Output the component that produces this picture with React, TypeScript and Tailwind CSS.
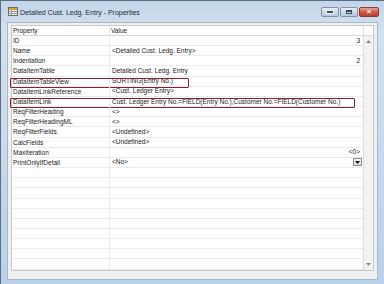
import React from "react";

type Row = { p: string; v?: string; r?: string; dd?: boolean; box?: number };

const rows: Row[] = [
  { p: "ID", r: "3" },
  { p: "Name", v: "<Detailed Cust. Ledg. Entry>" },
  { p: "Indentation", r: "2" },
  { p: "DataItemTable", v: "Detailed Cust. Ledg. Entry" },
  { p: "DataItemTableView", v: "SORTING(Entry No.)", box: 179 },
  { p: "DataItemLinkReference", v: "<Cust. Ledger Entry>" },
  { p: "DataItemLink", v: "Cust. Ledger Entry No.=FIELD(Entry No.),Customer No.=FIELD(Customer No.)", box: 345 },
  { p: "ReqFilterHeading", v: "<>" },
  { p: "ReqFilterHeadingML", v: "<>" },
  { p: "ReqFilterFields", v: "<Undefined>" },
  { p: "CalcFields", v: "<Undefined>" },
  { p: "MaxIteration", r: "<0>" },
  { p: "PrintOnlyIfDetail", v: "<No>", dd: true },
];

const empty = Array.from({ length: 10 }, () => ({ p: "" } as Row));

function TitleIcon() {
  return (
    <svg width="10" height="9" viewBox="0 0 10 9" className="shrink-0">
      <rect x="0.5" y="0.5" width="9" height="8" fill="#f4f4f4" stroke="#6b6b6b" />
      <rect x="1" y="1" width="8" height="2" fill="#e0a030" />
      <line x1="1" y1="4.5" x2="9" y2="4.5" stroke="#9a9a9a" />
      <line x1="1" y1="6.5" x2="9" y2="6.5" stroke="#9a9a9a" />
      <line x1="3.5" y1="3" x2="3.5" y2="8" stroke="#9a9a9a" />
    </svg>
  );
}

export default function App() {
  const all = [...rows, ...empty];
  return (
    <div
      className="w-[384px] h-[284px] flex flex-col overflow-hidden border-l border-t border-[#5c6e82] bg-[linear-gradient(#c3d5e9,#d3e1f0_30px,#b9d1ea)]"
      style={{ fontFamily: '"Liberation Sans", Arial, sans-serif' }}
    >
      {/* title bar */}
      <div className="h-[21px] flex items-center pl-[7px] pr-[5px] shrink-0">
        <TitleIcon />
        <span className="ml-[2px] text-[7px] text-[#1b2a3e] leading-none mt-[1px]">
          Detailed Cust. Ledg. Entry - Properties
        </span>
        <div className="ml-auto flex self-start mt-[6px] gap-[1px]">
          <div className="w-[18px] h-[10px] rounded-[2px] border border-[#7f93a9] bg-[linear-gradient(#e6eef7,#c9d8e8_50%,#b7cade)] flex items-end justify-center pb-[2px]">
            <div className="w-[6px] h-[2px] bg-[#3a4a5e] border border-[#f5f8fb] box-content" />
          </div>
          <div className="w-[18px] h-[10px] rounded-[2px] border border-[#7f93a9] bg-[linear-gradient(#e6eef7,#c9d8e8_50%,#b7cade)] flex items-center justify-center">
            <div className="w-[6px] h-[4px] border-[1.5px] border-t-[2px] border-[#3a4a5e]" />
          </div>
          <div className="w-[20px] h-[10px] rounded-[2px] border border-[#8a3a32] bg-[linear-gradient(#e9a394,#cf5b48_50%,#c04030)] flex items-center justify-center">
            <span className="text-white text-[8px] font-bold leading-none">×</span>
          </div>
        </div>
      </div>
      {/* body */}
      <div className="flex-1 flex pl-[6px] pr-[6px] pb-[5px]">
        <div className="flex-1 bg-[#f0f0f0] border border-[#a8b8c8] pt-[2px] pl-[3px] pr-[3px] pb-[8px] flex">
          <div className="flex-1 flex border border-[#c8c8c8] bg-white">
            <div className="flex-1 flex flex-col">
              {/* header */}
              <div className="h-[10px] flex border-b border-[#d9d9d9] text-[6.5px] text-[#222] leading-[10px]">
                <div className="w-[98px] pl-[1px] border-r border-[#e3e3e3]">Property</div>
                <div className="flex-1 pl-[1px]">Value</div>
              </div>
              {all.map((r, i) => (
                <div
                  key={i}
                  className="relative h-[10.17px] flex border-b border-[#ebebeb] text-[6.5px] text-[#202020] leading-[10px]"
                >
                  <div className="w-[98px] pl-[1px] border-r border-[#ebebeb] whitespace-nowrap overflow-hidden">
                    {r.p}
                  </div>
                  <div className="flex-1 pl-[2px] pr-[3px] flex items-center whitespace-nowrap overflow-hidden">
                    {r.v && <span>{r.v}</span>}
                    {r.r && <span className="ml-auto">{r.r}</span>}
                    {r.dd && (
                      <div className="ml-auto mr-[-2px] w-[9px] h-[8px] border border-[#8c8c8c] bg-[linear-gradient(#fafafa,#dcdcdc)] flex items-center justify-center">
                        <svg width="5" height="3" viewBox="0 0 5 3">
                          <polygon points="0,0 5,0 2.5,3" fill="#111" />
                        </svg>
                      </div>
                    )}
                  </div>
                  {r.box && (
                    <div
                      className="absolute left-[-2px] top-[1px] h-[10px] border-[1.5px] border-[#86202e] rounded-[1px]"
                      style={{ width: r.box }}
                    />
                  )}
                </div>
              ))}
            </div>
            {/* scrollbar */}
            <div className="w-[10px] flex flex-col border-l border-[#dcdcdc]">
              <div className="h-[10px] border-b border-[#d9d9d9] bg-white" />
              <div className="flex-1 bg-[#f2f2f2] flex flex-col items-center justify-between pt-[4px] pb-[4px]">
                <svg width="5" height="3" viewBox="0 0 5 3">
                  <polygon points="0,3 5,3 2.5,0" fill="#8a8a8a" />
                </svg>
                <svg width="5" height="3" viewBox="0 0 5 3">
                  <polygon points="0,0 5,0 2.5,3" fill="#8a8a8a" />
                </svg>
              </div>
            </div>
          </div>
        </div>
      </div>
    </div>
  );
}
